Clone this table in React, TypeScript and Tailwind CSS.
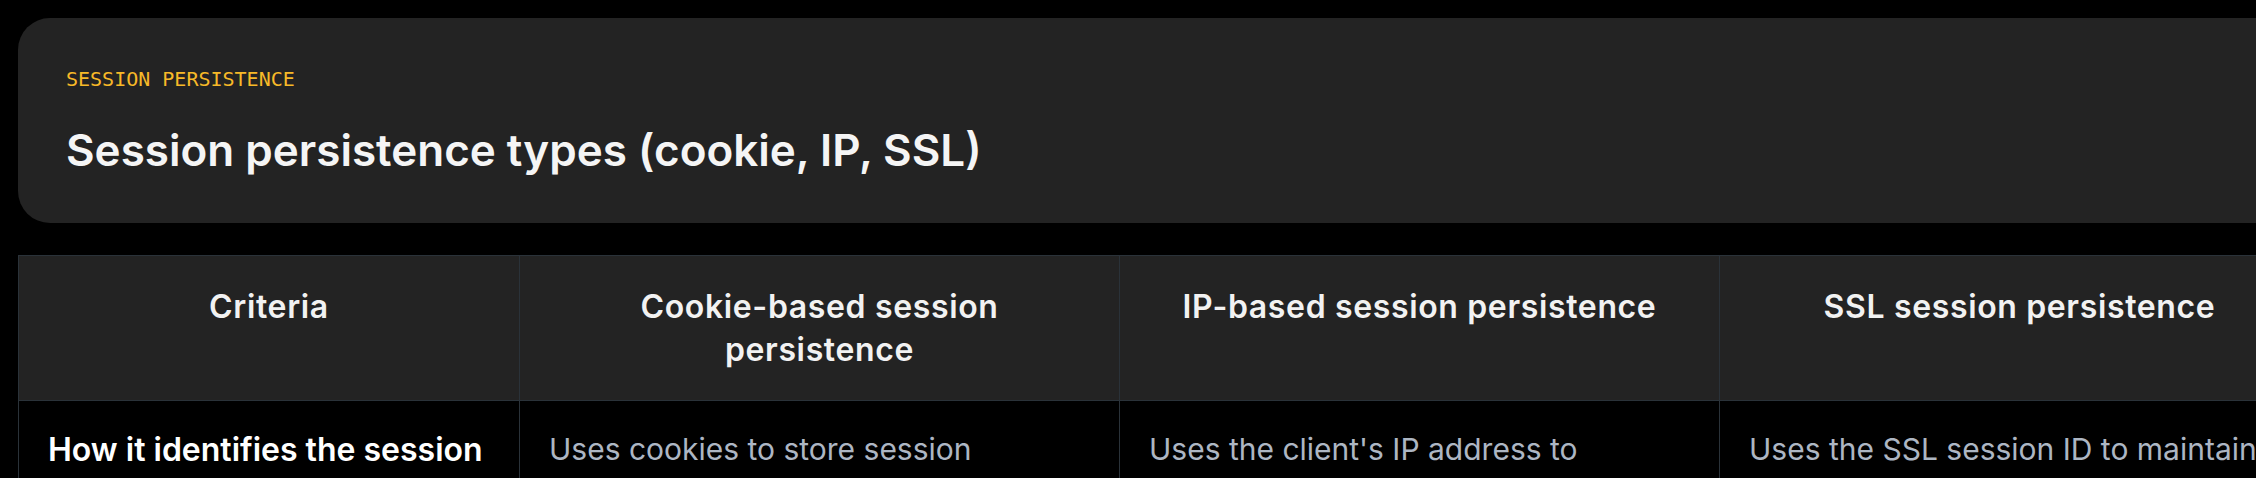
const columns = [
  "Criteria",
  "Cookie-based session persistence",
  "IP-based session persistence",
  "SSL session persistence",
];

const rows = [
  {
    criteria: "How it identifies the session",
    cells: [
      "Uses cookies to store session identifiers on the client's browser.",
      "Uses the client's IP address to identify and route returning requests.",
      "Uses the SSL session ID to maintain the connection to the same server.",
    ],
  },
  {
    criteria: "Best suited for",
    cells: [
      "Web applications where clients accept cookies.",
      "Clients with stable IP addresses.",
      "Encrypted traffic terminated at the backend.",
    ],
  },
];

export default function App() {
  return (
    <div className="min-h-screen bg-black font-['Inter',sans-serif]">
      <div className="pl-[18px] pr-[2px] pt-[18px] overflow-hidden">
        {/* Header card */}
        <div className="w-[2300px] rounded-[32px] bg-[#232323] px-[48px] pt-[47px] pb-[47px]">
          <div className="font-['DejaVu_Sans_Mono',monospace] text-[20px] leading-[29px] text-[#f7b928] uppercase">
            Session persistence
          </div>
          <h1 className="mt-[30px] text-[44px] leading-[52px] font-semibold text-[#f5f5f5]">
            Session persistence types (cookie, IP, SSL)
          </h1>
        </div>

        {/* Comparison table */}
        <table className="mt-[32px] table-fixed border-collapse w-[2301px]">
          <colgroup>
            <col className="w-[501px]" />
            <col className="w-[600px]" />
            <col className="w-[600px]" />
            <col className="w-[600px]" />
          </colgroup>
          <thead>
            <tr>
              {columns.map((col) => (
                <th
                  key={col}
                  className="border border-[#2a3239] bg-[#232323] p-[29px] align-top text-center text-[32px] leading-[43px] font-semibold tracking-[0.02em] text-[#f2f2f2]"
                >
                  {col}
                </th>
              ))}
            </tr>
          </thead>
          <tbody>
            {rows.map((row) => (
              <tr key={row.criteria}>
                <td className="border border-[#2a3239] bg-black px-[29px] pt-[27px] pb-[29px] align-top text-[32px] leading-[43px] font-semibold text-white">
                  {row.criteria}
                </td>
                {row.cells.map((cell, i) => (
                  <td
                    key={i}
                    className="border border-[#2a3239] bg-black px-[29px] pt-[27px] pb-[29px] align-top text-[30px] leading-[43px] text-[#adb6c3]"
                  >
                    {cell}
                  </td>
                ))}
              </tr>
            ))}
          </tbody>
        </table>
      </div>
    </div>
  );
}
